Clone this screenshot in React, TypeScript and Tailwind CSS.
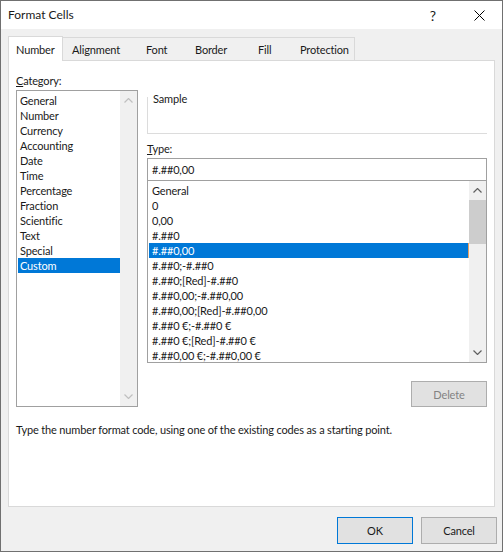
import React from "react";

const categories = [
  "General",
  "Number",
  "Currency",
  "Accounting",
  "Date",
  "Time",
  "Percentage",
  "Fraction",
  "Scientific",
  "Text",
  "Special",
  "Custom",
];

const formats = [
  "General",
  "0",
  "0,00",
  "#.##0",
  "#.##0,00",
  "#.##0;-#.##0",
  "#.##0;[Red]-#.##0",
  "#.##0,00;-#.##0,00",
  "#.##0,00;[Red]-#.##0,00",
  "#.##0 €;-#.##0 €",
  "#.##0 €;[Red]-#.##0 €",
  "#.##0,00 €;-#.##0,00 €",
];

const tabs = [
  { label: "Alignment", w: "w-[74px]" },
  { label: "Font", w: "w-[49px]" },
  { label: "Border", w: "w-[63px]" },
  { label: "Fill", w: "w-[42px]" },
  { label: "Protection", w: "w-[63px]" },
];

function Chevron({ up, color }: { up?: boolean; color: string }) {
  return (
    <svg width="9" height="5" viewBox="0 0 9 5" fill="none">
      <polyline
        points={up ? "0.5,4.5 4.5,0.5 8.5,4.5" : "0.5,0.5 4.5,4.5 8.5,0.5"}
        stroke={color}
        strokeWidth="1.2"
      />
    </svg>
  );
}

export default function App() {
  return (
    <div className="w-[503px] h-[552px] border border-[#707070] bg-[#f0f0f0] flex flex-col text-[11px] tracking-[-0.15px] leading-[15px] text-[#1a1a1a] font-['Lato',sans-serif]">
      {/* title bar */}
      <div className="h-[28px] bg-white flex items-center shrink-0 text-[12px] tracking-normal">
        <span className="pl-[7px] -mt-[1px]">Format Cells</span>
        <div className="ml-auto flex h-full">
          <div className="w-[46px] h-full flex items-center justify-center text-[14px]">?</div>
          <div className="w-[46px] h-full flex items-center justify-center">
            <svg width="11" height="11" viewBox="0 0 11 11">
              <path d="M0.5 0.5 L10.5 10.5 M10.5 0.5 L0.5 10.5" stroke="#000" strokeWidth="1" />
            </svg>
          </div>
        </div>
      </div>

      <div className="px-[7px] pt-[7px]">
        {/* tabs */}
        <div className="flex items-end h-[24px]">
          <div className="relative z-10 -mb-px h-[25px] w-[55px] bg-white border-l border-t border-r border-[#d9d9d9] pl-[7px] flex items-center">
            Number
          </div>
          <div className="flex h-[23px] border-t border-r border-[#d9d9d9]">
            {tabs.map((t) => (
              <div key={t.label} className={`${t.w} pl-[9px] flex items-center`}>
                {t.label}
              </div>
            ))}
          </div>
        </div>

        {/* panel */}
        <div className="h-[447px] bg-white border border-[#d9d9d9] pl-[7px] pr-[7px] pt-[12px]">
          <div className="flex gap-[9px]">
            {/* category */}
            <div className="w-[122px] flex flex-col">
              <div>
                <u>C</u>ategory:
              </div>
              <div className="mt-[2px] h-[317px] border border-[#a0a0a0] flex pl-px">
                <div className="w-[102px] pt-[2px]">
                  {categories.map((c) => (
                    <div
                      key={c}
                      className={
                        c === "Custom"
                          ? "h-[15px] pl-[2px] bg-[#0078d7] text-white"
                          : "h-[15px] pl-[2px]"
                      }
                    >
                      {c}
                    </div>
                  ))}
                </div>
                <div className="w-[17px] bg-[#f0f0f0] flex flex-col justify-between items-center py-[7px]">
                  <Chevron up color="#c0c0c0" />
                  <Chevron color="#c0c0c0" />
                </div>
              </div>
            </div>

            {/* right side */}
            <div className="w-[340px] flex flex-col">
              <div className="mt-[24px] h-[37px] border-l border-b border-[#dcdcdc] pl-[5px]">
                <div className="-mt-[6px]">Sample</div>
              </div>
              <div className="mt-[7px]">
                <u>T</u>ype:
              </div>
              <div className="mt-[2px] h-[23px] border border-[#a0a0a0] pl-[4px] flex items-center">
                #.##0,00
              </div>
              <div className="h-[182px] border-x border-b border-[#a0a0a0] flex pl-px overflow-hidden">
                <div className="w-[320px] pt-[2px] overflow-hidden">
                  {formats.map((f) => (
                    <div
                      key={f}
                      className={
                        f === "#.##0,00"
                          ? "h-[15px] pl-[3px] bg-[#0078d7] text-white whitespace-nowrap border-r border-[#e8a060]"
                          : "h-[15px] pl-[3px] whitespace-nowrap"
                      }
                    >
                      {f}
                    </div>
                  ))}
                </div>
                <div className="w-[17px] bg-[#f0f0f0] flex flex-col">
                  <div className="h-[19px] flex items-center justify-center">
                    <Chevron up color="#606060" />
                  </div>
                  <div className="h-[44px] bg-[#cdcdcd]" />
                  <div className="flex-1" />
                  <div className="h-[19px] flex items-center justify-center">
                    <Chevron color="#606060" />
                  </div>
                </div>
              </div>
              <div className="mt-[18px] self-end w-[76px] h-[26px] bg-[#e1e1e1] border border-[#adadad] text-[#838383] flex items-center justify-center">
                Delete
              </div>
            </div>
          </div>

          <div className="mt-[15px]">
            Type the number format code, using one of the existing codes as a starting point.
          </div>
        </div>
      </div>

      {/* buttons */}
      <div className="flex justify-end gap-[8px] pr-[5px] pt-[10px]">
        <div className="w-[76px] h-[27px] bg-[#e1e1e1] border border-[#0078d7] flex items-center justify-center">
          OK
        </div>
        <div className="w-[76px] h-[27px] bg-[#e1e1e1] border border-[#adadad] flex items-center justify-center">
          Cancel
        </div>
      </div>
    </div>
  );
}
